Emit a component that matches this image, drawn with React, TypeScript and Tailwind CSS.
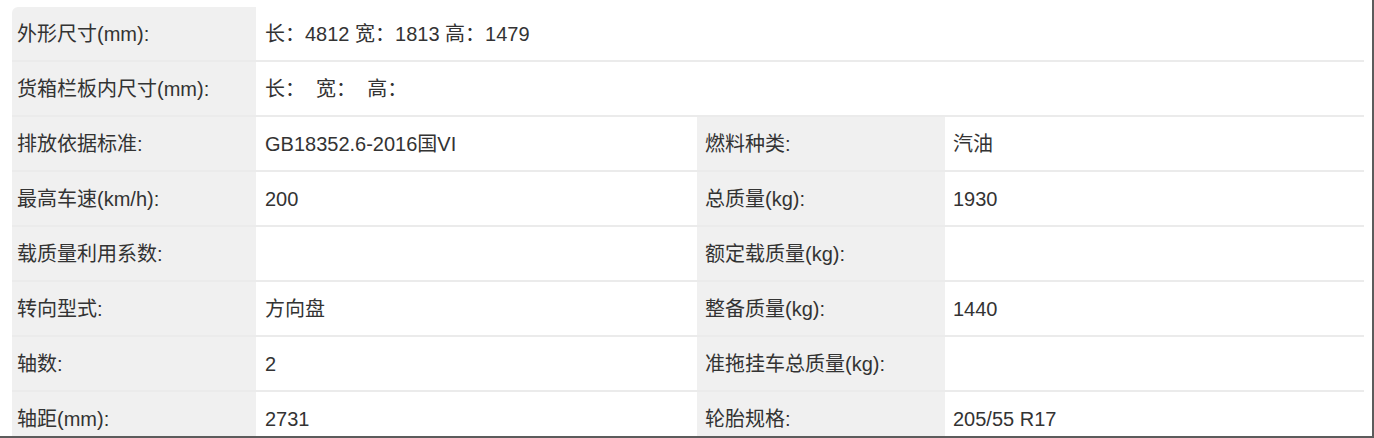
import React from "react";

const font = { fontFamily: '"Liberation Sans", "Noto Sans CJK SC", sans-serif' };

type Row = { l1: string; v1: string; l2?: string; v2?: string; span?: boolean };

const rows: Row[] = [
  { l1: "外形尺寸(mm):", v1: "长：4812 宽：1813 高：1479", span: true },
  { l1: "货箱栏板内尺寸(mm):", v1: "长：  宽：  高：", span: true },
  { l1: "排放依据标准:", v1: "GB18352.6-2016国VI", l2: "燃料种类:", v2: "汽油" },
  { l1: "最高车速(km/h):", v1: "200", l2: "总质量(kg):", v2: "1930" },
  { l1: "载质量利用系数:", v1: "", l2: "额定载质量(kg):", v2: "" },
  { l1: "转向型式:", v1: "方向盘", l2: "整备质量(kg):", v2: "1440" },
  { l1: "轴数:", v1: "2", l2: "准拖挂车总质量(kg):", v2: "" },
  { l1: "轴距(mm):", v1: "2731", l2: "轮胎规格:", v2: "205/55 R17" },
];

export default function App() {
  return (
    <div
      className="w-[1374px] h-[438px] bg-white overflow-hidden border-r-2 border-b-2 border-[#5c5c5c] box-border"
      style={font}
    >
      <div className="ml-[12px] mt-[7px] w-[1352px] rounded-tl-[6px] overflow-hidden text-[20px] text-[#333333]">
        {rows.map((r, i) => (
          <div key={i} className="flex h-[55px] border-b-2 border-[#ebebeb] box-border">
            <div className="w-[244px] shrink-0 bg-[#f0f0f0] flex items-center pl-[5px] whitespace-pre">{r.l1}</div>
            {r.span ? (
              <div className="flex-1 flex items-center pl-[9px] whitespace-pre">{r.v1}</div>
            ) : (
              <>
                <div className="w-[441px] shrink-0 flex items-center pl-[9px] whitespace-pre">{r.v1}</div>
                <div className="w-[248px] shrink-0 bg-[#f0f0f0] flex items-center pl-[8px] whitespace-pre">{r.l2}</div>
                <div className="flex-1 flex items-center pl-[8px] whitespace-pre">{r.v2}</div>
              </>
            )}
          </div>
        ))}
      </div>
    </div>
  );
}
